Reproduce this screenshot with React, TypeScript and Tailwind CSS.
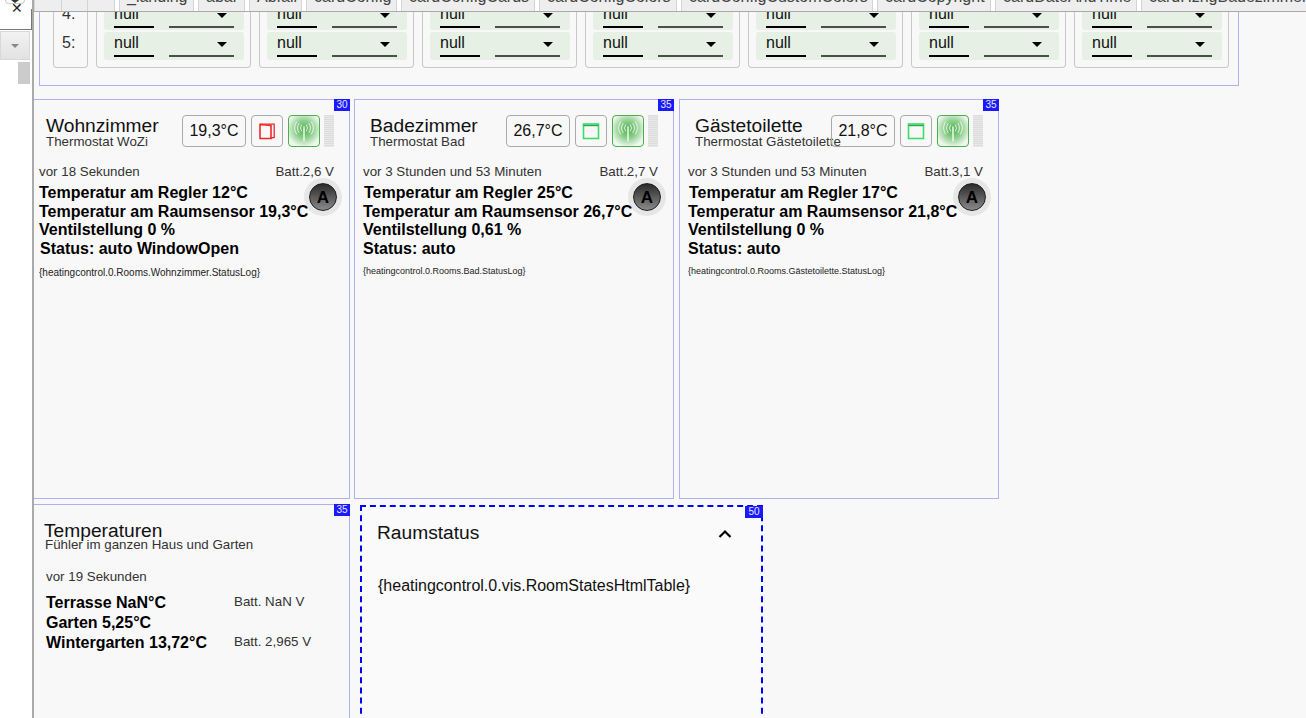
const FONT = "font-['Liberation_Sans',Arial,sans-serif]";

const tabs = [
  { label: "_landing", w: "w-[75px]" },
  { label: "abar", w: "w-[47px]" },
  { label: "Abfall", w: "w-[53px]" },
  { label: "cardConfig", w: "w-[91px]" },
  { label: "cardConfigCards", w: "w-[134px]" },
  { label: "cardConfigColors", w: "w-[138px]" },
  { label: "cardConfigCustomColors", w: "w-[192px]" },
  { label: "cardCopyright", w: "w-[114px]" },
  { label: "cardDateAndTime", w: "w-[142px]" },
  { label: "cardHzngBadezimmer", w: "w-[170px]" },
];

const rooms = [
  {
    name: "Wohnzimmer",
    sub: "Thermostat WoZi",
    temp: "19,3°C",
    open: true,
    badge: "30",
    ago: "vor 18 Sekunden",
    batt: "Batt.2,6 V",
    regler: "Temperatur am Regler 12°C",
    sensor: "Temperatur am Raumsensor 19,3°C",
    valve: "Ventilstellung 0 %",
    status: "Status: auto WindowOpen",
    log: "{heatingcontrol.0.Rooms.Wohnzimmer.StatusLog}",
    card: "w-[316px] border-l-0",
    titlePad: "pl-[12px]",
    bodyPad: "pl-[5px]",
    logStyle: "mt-[8px] text-[10px]",
    lastIndent: "pl-px",
    firstIndent: "",
  },
  {
    name: "Badezimmer",
    sub: "Thermostat Bad",
    temp: "26,7°C",
    open: false,
    badge: "35",
    ago: "vor 3 Stunden und 53 Minuten",
    batt: "Batt.2,7 V",
    regler: "Temperatur am Regler 25°C",
    sensor: "Temperatur am Raumsensor 26,7°C",
    valve: "Ventilstellung 0,61 %",
    status: "Status: auto",
    log: "{heatingcontrol.0.Rooms.Bad.StatusLog}",
    card: "w-[320px] mr-px",
    titlePad: "pl-[15px]",
    bodyPad: "pl-[8px]",
    logStyle: "mt-[6px] text-[9px]",
    lastIndent: "",
    firstIndent: "pl-px",
  },
  {
    name: "Gästetoilette",
    sub: "Thermostat Gästetoilette",
    temp: "21,8°C",
    open: false,
    badge: "35",
    ago: "vor 3 Stunden und 53 Minuten",
    batt: "Batt.3,1 V",
    regler: "Temperatur am Regler 17°C",
    sensor: "Temperatur am Raumsensor 21,8°C",
    valve: "Ventilstellung 0 %",
    status: "Status: auto",
    log: "{heatingcontrol.0.Rooms.Gästetoilette.StatusLog}",
    card: "w-[320px]",
    titlePad: "pl-[15px]",
    bodyPad: "pl-[8px]",
    logStyle: "mt-[6px] text-[9px]",
    lastIndent: "",
    firstIndent: "pl-px",
  },
];

function Badge({ value, className }: { value: string; className: string }) {
  return (
    <div className={`absolute flex h-3 items-center justify-center bg-[#1a1aff] text-[10px] leading-none text-[#e8e8ff] ${className}`}>
      {value}
    </div>
  );
}

function NullSelect() {
  return (
    <div className="flex h-[28px] gap-[15px] rounded-[3px] bg-[#e6f0e5] pl-[10px] pr-[10px]">
      <div className="h-[25px] w-10 border-b-2 border-black text-base leading-[21px] text-[#111]">null</div>
      <div className="relative h-[25px] w-[65px] border-b-2 border-[#4a4f49]">
        <div className="absolute right-[7px] top-[10px] h-0 w-0 border-x-[5px] border-t-[5px] border-x-transparent border-t-black" />
      </div>
    </div>
  );
}

function ConfigPanel() {
  return (
    <div className="ml-[5px] h-[74px] w-[1200px] border-b border-r border-l border-[#b0b0f0] pl-[13px]">
      <div className="flex gap-[8px]">
        <div className="h-[56px] w-[35px] overflow-hidden rounded-b-[4px] border border-t-0 border-[#c8c8c8] pl-[8px] text-base leading-[28px] text-[#333]">
          <div className="-mt-[12px] h-[29px]">4:</div>
          <div className="h-[28px]">5:</div>
        </div>
        {[0, 1, 2, 3, 4, 5, 6].map((i) => (
          <div key={i} className="h-[56px] w-[155px] rounded-b-[4px] border border-t-0 border-[#c8c8c8] pl-[7px] pr-[6px]">
            <div className="mb-[2px] h-[18px] overflow-hidden rounded-b-[3px]">
              <div className="-mt-[9px]">
                <NullSelect />
              </div>
            </div>
            <NullSelect />
          </div>
        ))}
      </div>
    </div>
  );
}

function WindowIcon({ open }: { open: boolean }) {
  if (open) {
    return (
      <svg width="18" height="18" viewBox="0 0 18 18" fill="none" stroke="#f02828">
        <path d="M2 2.5 L13 3.5 V16.5 H2 Z" strokeWidth="1.6" />
        <path d="M2 2.2 H16.2 V15.5 L13 16" strokeWidth="1.3" />
      </svg>
    );
  }
  return (
    <svg width="18" height="18" viewBox="0 0 18 18" fill="none" stroke="#3ddc6a">
      <rect x="1.5" y="2" width="15" height="14.5" strokeWidth="1.6" />
      <path d="M1.5 3.5 H16.5" strokeWidth="1.4" stroke="#2aa850" />
    </svg>
  );
}

function AntennaIcon() {
  return (
    <svg width="24" height="24" viewBox="0 0 24 24" fill="none" stroke="#ffffff" strokeWidth="0.8" strokeLinecap="round">
      <path d="M12 8 V22" strokeWidth="1.6" stroke="#e8f5e8" />
      <path d="M9.5 6 a5 5 0 0 0 0 6" />
      <path d="M7 4.5 a8 8 0 0 0 0 9" />
      <path d="M4.5 3 a11 11 0 0 0 0 12" />
      <path d="M14.5 6 a5 5 0 0 1 0 6" />
      <path d="M17 4.5 a8 8 0 0 1 0 9" />
      <path d="M19.5 3 a11 11 0 0 1 0 12" />
    </svg>
  );
}

function AutoButton() {
  return (
    <div className="absolute right-[12px] top-[83px] flex h-[28px] w-[28px] items-center justify-center rounded-full border border-[#1c1c1c] bg-[linear-gradient(#2a2a2a,#8a8a8a)] text-[17px] font-bold leading-none text-black shadow-[0_0_0_5px_rgba(0,0,0,0.07)]">
      A
    </div>
  );
}

function RoomCard({ room }: { room: (typeof rooms)[number] }) {
  return (
    <div className={`relative h-[400px] shrink-0 border border-[#b0b0f0] ${room.card}`}>
      <Badge value={room.badge} className="-right-px -top-px w-4" />
      <div className={`mt-[15px] flex h-[32px] items-center pr-[15px] ${room.titlePad}`}>
        <div className="min-w-0 flex-1 whitespace-nowrap pt-[1px]">
          <div className="text-[19.2px] leading-[20px] text-[#111]">{room.name}</div>
          <div className="-mt-[1px] text-[13.33px] leading-[13px] text-[#333]">{room.sub}</div>
        </div>
        <div className="flex h-[32px] w-[64px] items-center justify-center rounded-[4px] border border-[#aaaaaa] text-base text-[#111]">
          {room.temp}
        </div>
        <div className="ml-[5px] flex h-[32px] w-[32px] items-center justify-center rounded-[4px] border border-[#aaaaaa]">
          <WindowIcon open={room.open} />
        </div>
        <div className="ml-[5px] flex h-[32px] w-[32px] items-center justify-center rounded-[4px] border border-[#4ab04a] bg-[radial-gradient(circle_at_50%_45%,#5cb85c_10%,#8fd08f_40%,#eef6ee_78%)]">
          <AntennaIcon />
        </div>
        <div className="ml-[4px] h-[32px] w-[10px] bg-[repeating-linear-gradient(#dcdcdc_0px,#dcdcdc_1px,#e8e8e8_1px,#e8e8e8_2px)]" />
      </div>
      <div className={`mt-[17px] flex justify-between pr-[15px] text-[13.33px] leading-[15px] text-[#333] ${room.bodyPad}`}>
        <span>{room.ago}</span>
        <span>{room.batt}</span>
      </div>
      <div className={`mt-[5px] whitespace-nowrap text-base font-bold leading-[18.7px] text-black ${room.bodyPad}`}>
        <div className={room.firstIndent}>{room.regler}</div>
        <div>{room.sensor}</div>
        <div>{room.valve}</div>
        <div className={room.lastIndent}>{room.status}</div>
      </div>
      <div className={`leading-[12px] text-[#222] ${room.bodyPad} ${room.logStyle}`}>{room.log}</div>
      <AutoButton />
    </div>
  );
}

function TemperatureCard() {
  return (
    <div className="relative h-[300px] w-[316px] shrink-0 border border-l-0 border-[#b0b0f0] pl-[10px]">
      <Badge value="35" className="-right-px -top-px w-4" />
      <div className="mt-[16px] text-[19.2px] leading-[20px] text-[#111]">Temperaturen</div>
      <div className="-mt-[4px] pl-px text-[13.33px] leading-[15px] text-[#333]">Fühler im ganzen Haus und Garten</div>
      <div className="mt-[17px] pl-[2px] text-[13.33px] leading-[15px] text-[#333]">vor 19 Sekunden</div>
      <div className="mt-[9px] pl-[2px]">
        {[
          { label: "Terrasse NaN°C", batt: "Batt. NaN V" },
          { label: "Garten 5,25°C", batt: "" },
          { label: "Wintergarten 13,72°C", batt: "Batt. 2,965 V" },
        ].map((row) => (
          <div key={row.label} className="flex h-[20px] items-center">
            <div className="w-[188px] text-base font-bold text-black">{row.label}</div>
            <div className="-mt-[3px] text-[13.33px] text-[#333]">{row.batt}</div>
          </div>
        ))}
      </div>
    </div>
  );
}

function StatusCard() {
  return (
    <div className="relative ml-[10px] mt-px h-[300px] w-[403px] shrink-0 border-2 border-dashed border-[#0000ff] bg-[#fafafa] pl-[15px] pr-[29px]">
      <Badge value="50" className="-right-[2px] -top-px w-[18px]" />
      <div className="mt-[14px] flex h-[24px] items-center justify-between text-[19.2px] text-[#111]">
        <span>Raumstatus</span>
        <svg className="mt-[2px]" width="14" height="14" viewBox="0 0 14 14" fill="none" stroke="#000" strokeWidth="2.2">
          <path d="M1.5 10 L7 4.5 L12.5 10" />
        </svg>
      </div>
      <div className="mt-[32px] pl-px text-base leading-[18px] text-[#111]">{"{heatingcontrol.0.vis.RoomStatesHtmlTable}"}</div>
    </div>
  );
}

export default function App() {
  return (
    <div className={`flex h-[718px] w-[1306px] overflow-hidden bg-white ${FONT}`}>
      {/* left tool strip */}
      <div className="relative w-[34px] shrink-0 border-r-2 border-[#aaaaaa] bg-white">
        <div className="ml-[5px] flex h-[4px] w-[20px] justify-center rounded-b-[4px] border border-t-0 border-[#cccccc]">
          <div className="h-0 w-0 border-x-[4px] border-t-[3px] border-x-transparent border-t-[#333]" />
        </div>
        <div className="h-[5px]" />
        <div className="h-[21px] w-[32px] border-b border-r border-[#777777] bg-white" />
        <div className="mt-px flex h-[29px] w-[30px] items-center justify-center border border-[#d8d8d8] bg-[linear-gradient(#f2f2f2,#e2e2e2)]">
          <div className="h-0 w-0 border-x-[4px] border-t-[4px] border-x-transparent border-t-[#888888]" />
        </div>
        <div className="ml-[18px] mt-[2px] h-[22px] w-[12px] bg-[#cccccc]" />
        <div className="absolute left-[11px] top-[1px] text-[14px] leading-[14px] text-[#222]">✕</div>
      </div>

      <div className="min-w-0 flex-1 bg-[#f8f8f8]">
        {/* clipped tab bar */}
        <div className="flex h-[12px] items-start gap-[4px] overflow-hidden border-b border-[#aaaaaa] bg-white">
          <div className="flex h-[11px] w-[81px] shrink-0 border-x border-[#d4d4d4] bg-[#eeeeee]">
            <div className="flex-1 border-r border-[#d4d4d4]" />
            <div className="flex-1 border-r border-[#d4d4d4]" />
            <div className="flex-1" />
          </div>
          {tabs.map((tab) => (
            <div
              key={tab.label}
              className={`h-[11px] shrink-0 overflow-hidden whitespace-nowrap border-x border-[#d4d4d4] bg-[#eeeeee] pl-[7px] ${tab.w}`}
            >
              <div className="-mt-[12px] text-base leading-[18px] text-[#444]">{tab.label}</div>
            </div>
          ))}
        </div>

        <ConfigPanel />

        <div className="mt-[13px] flex gap-[4px]">
          <RoomCard room={rooms[0]} />
          <RoomCard room={rooms[1]} />
          <RoomCard room={rooms[2]} />
        </div>

        <div className="mt-[5px] flex">
          <TemperatureCard />
          <StatusCard />
        </div>
      </div>
    </div>
  );
}
